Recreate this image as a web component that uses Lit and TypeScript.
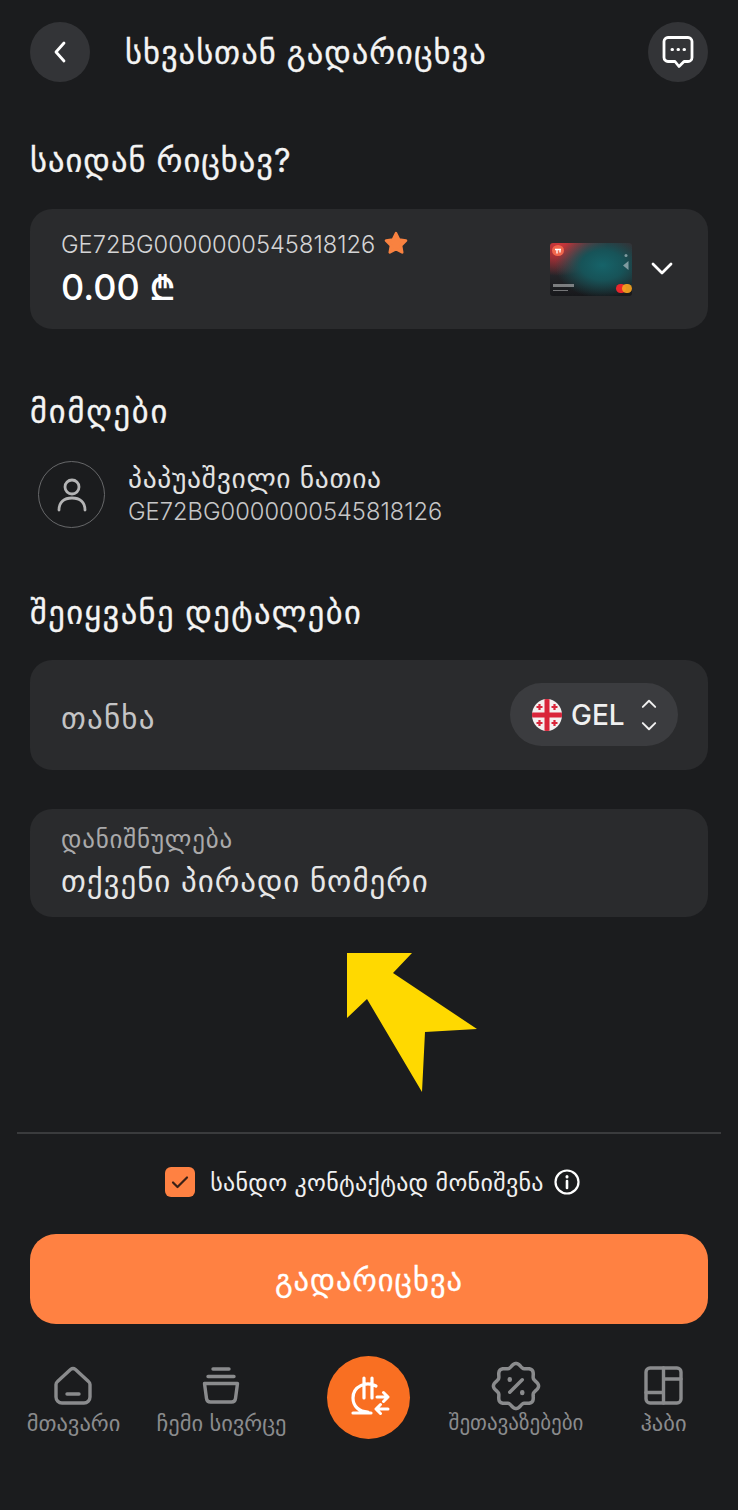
import { LitElement, html, css, svg } from "lit";
import { customElement } from "lit/decorators.js";

const IBAN = "GE72BG0000000545818126";

const chevronDown = (cls: string) => html`<svg class=${cls} viewBox="0 0 24 16" fill="none" stroke="currentColor" stroke-width="2.8" stroke-linecap="round" stroke-linejoin="round"><path d="M3 3l9 9 9-9"/></svg>`;

const flagCross = (x: number, y: number) => svg`<path d="M${x - 3} ${y}h6M${x} ${y - 3}v6" stroke="#d9253a" stroke-width="2.2"/>`;

// wavy outline of the offers badge
const badgePath = () => {
  const pts: string[] = [];
  for (let i = 0; i < 96; i++) {
    const a = (i / 96) * Math.PI * 2;
    const r = 16.6 + 1.5 * Math.cos(8 * a);
    pts.push(`${(20 + r * Math.sin(a)).toFixed(2)} ${(20 - r * Math.cos(a)).toFixed(2)}`);
  }
  return `M${pts.join("L")}Z`;
};

const navItems = [
  {
    label: "მთავარი",
    cls: "home",
    icon: svg`<path d="M3.500 15.500 16.500 3.500a4 4 0 0 1 5 0L34.500 15.500a4 4 0 0 1 1.500 3V31a6 6 0 0 1-6 6H8a6 6 0 0 1-6-6V18.500a4 4 0 0 1 1.500-3Z"/><path d="M13 28h12"/>`,
  },
  {
    label: "ჩემი სივრცე",
    cls: "space",
    icon: svg`<path d="M11 3h16M6 10.500h26"/><path d="M2.500 17.500h33l-2 15a4 4 0 0 1-4 3.500H8.500a4 4 0 0 1-4-3.500Z"/>`,
  },
  null,
  {
    label: "შეთავაზებები",
    cls: "offers",
    icon: svg`<path d=${badgePath()}/><path d="M25 15 15 25"/><path d="M15 14.500v.5M25 25v.5" stroke-width="3.600"/>`,
  },
  {
    label: "ჰაბი",
    cls: "hub",
    icon: svg`<rect x="2" y="2" width="35" height="35" rx="4"/><path d="M19.500 2v35M2 26.500h17.500M19.500 13H37"/>`,
  },
];

@customElement("app-root")
export class AppRoot extends LitElement {
  static styles = css`
    :host {
      display: block;
      position: relative;
      width: 738px;
      height: 1510px;
      overflow: hidden;
      background: #1b1c1e;
      color: #f4f4f4;
      font-family: "Inter", "DejaVu Sans", sans-serif;
    }
    svg {
      display: block;
    }
    .page {
      display: flex;
      flex-direction: column;
      padding: 22px 30px 0;
      box-sizing: border-box;
      height: 100%;
    }
    .header {
      display: flex;
      align-items: center;
      height: 60px;
    }
    .round {
      width: 60px;
      height: 60px;
      border-radius: 50%;
      background: #333437;
      display: flex;
      align-items: center;
      justify-content: center;
      flex: none;
    }
    .round .back {
      width: 14px;
      height: 24px;
    }
    .round .chat {
      width: 32px;
      height: 34px;
    }
    .title {
      flex: 1;
      margin-left: 35px;
      padding-top: 2px;
      font-size: 32.5px;
      letter-spacing: 1px;
      line-height: 58px;
      white-space: nowrap;
      -webkit-text-stroke: 0.3px currentColor;
    }
    h2 {
      margin: 0;
      font-weight: 400;
      font-size: 32.5px;
      letter-spacing: 1px;
      line-height: 36px;
      white-space: nowrap;
      -webkit-text-stroke: 0.3px currentColor;
    }
    .from-title {
      margin-top: 61px;
    }
    .card {
      background: #2a2b2d;
      border-radius: 22px;
    }
    .account {
      margin-top: 30px;
      height: 120px;
      display: flex;
      align-items: center;
      padding: 0 34px 0 31px;
      box-sizing: border-box;
    }
    .account-text {
      flex: 1;
    }
    .iban-row {
      display: flex;
      align-items: center;
      gap: 8px;
      font-size: 23.7px;
      font-weight: 300;
      line-height: 28px;
      color: #d4d4d5;
    }
    .star {
      width: 26px;
      height: 26px;
      margin-top: -3px;
    }
    .balance {
      margin-top: 7px;
      font-size: 36px;
      line-height: 42px;
      font-weight: 500;
      color: #fff;
    }
    .thumb {
      position: relative;
      width: 82px;
      height: 53px;
      border-radius: 3px;
      overflow: hidden;
      background:
        radial-gradient(ellipse 58% 62% at 64% 42%, #166369 0%, #175358 45%, rgba(23, 70, 74, 0) 100%),
        radial-gradient(ellipse 60% 62% at 10% 0%, #cf373b 0%, #a02f35 45%, rgba(120, 40, 46, 0) 100%),
        linear-gradient(180deg, #3a2a2e 0%, #26262a 55%, #17181b 100%);
    }
    .thumb .logo {
      position: absolute;
      left: 2px;
      top: 2px;
      width: 12px;
      height: 11px;
    }
    .thumb .mc1,
    .thumb .mc2 {
      position: absolute;
      top: 41px;
      width: 9.5px;
      height: 9.5px;
      border-radius: 50%;
    }
    .thumb .mc1 {
      left: 66px;
      background: #e8262c;
    }
    .thumb .mc2 {
      left: 72px;
      background: #f5a21f;
      opacity: 0.92;
    }
    .thumb .name {
      position: absolute;
      left: 3px;
      top: 41px;
      width: 21px;
      height: 3px;
      background: #a4a5a7;
      opacity: 0.7;
    }
    .thumb .dots {
      position: absolute;
      left: 3px;
      top: 47px;
      width: 15px;
      height: 1.5px;
      background: #8c8d8f;
      opacity: 0.8;
    }
    .thumb .nfc {
      position: absolute;
      left: 72px;
      top: 10px;
      width: 7px;
      height: 17px;
    }
    .account .chev {
      width: 24px;
      height: 16px;
      margin-left: 18px;
      color: #fff;
    }
    .to-title {
      margin-top: 65px;
      letter-spacing: 1.8px;
    }
    .recipient {
      margin-top: 31px;
      margin-left: 8px;
      display: flex;
      align-items: center;
      gap: 23px;
    }
    .avatar {
      width: 67px;
      height: 67px;
      border: 1.5px solid #67686a;
      border-radius: 50%;
      box-sizing: border-box;
      display: flex;
      align-items: center;
      justify-content: center;
      color: #b4b4b5;
    }
    .avatar svg {
      width: 30px;
      height: 34px;
    }
    .recipient-name {
      font-size: 27.5px;
      letter-spacing: 0.7px;
      line-height: 34px;
      color: #e2e2e2;
    }
    .recipient-iban {
      font-size: 23.7px;
      font-weight: 300;
      line-height: 32px;
      margin-top: 1px;
      color: #c6c6c7;
    }
    .details-title {
      margin-top: 67px;
      letter-spacing: 1.4px;
    }
    .amount {
      margin-top: 29px;
      height: 110px;
      display: flex;
      align-items: center;
      justify-content: space-between;
      padding: 0 30px 0 31px;
      box-sizing: border-box;
    }
    .amount-label {
      font-size: 31px;
      letter-spacing: 1.2px;
      padding-top: 4px;
      color: #c4c4c5;
    }
    .currency {
      width: 168px;
      height: 63px;
      border-radius: 32px;
      background: #3b3c3f;
      display: flex;
      align-items: center;
      padding-left: 22px;
      box-sizing: border-box;
      margin-top: -1px;
    }
    .flag {
      width: 30px;
      height: 32px;
    }
    .code {
      margin-left: 9px;
      font-size: 28px;
      font-weight: 500;
      color: #f0f0f0;
    }
    .updown {
      margin-left: 15px;
      display: flex;
      flex-direction: column;
      gap: 12px;
      color: #f0f0f0;
    }
    .updown svg {
      width: 18px;
      height: 11px;
    }
    .updown svg:first-child {
      transform: scaleY(-1);
    }
    .purpose {
      margin-top: 39px;
      height: 108px;
      padding: 16px 31px 0;
      box-sizing: border-box;
    }
    .purpose-label {
      font-size: 25px;
      letter-spacing: 0.8px;
      line-height: 28px;
      color: #a9a9aa;
    }
    .purpose-value {
      margin-top: 10px;
      font-size: 31px;
      letter-spacing: 0.95px;
      line-height: 36px;
      color: #e6e6e6;
    }
    .divider {
      margin: 215px -13px 0;
      height: 2px;
      background: #3a3b3d;
    }
    .trusted {
      margin-top: 33px;
      padding-left: 7px;
      display: flex;
      align-items: center;
      justify-content: center;
      gap: 15px;
      font-size: 24px;
      letter-spacing: 0.3px;
      color: #f0f0f0;
      height: 30px;
    }
    .check {
      width: 30px;
      height: 30px;
      background: #ff8142;
      border-radius: 6px;
      display: flex;
      align-items: center;
      justify-content: center;
      color: #3a2016;
    }
    .check svg {
      width: 18px;
      height: 14px;
    }
    .info {
      width: 26px;
      height: 26px;
      margin-left: -5px;
    }
    .pay {
      margin-top: 37px;
      height: 90px;
      border-radius: 26px;
      background: #ff8142;
      display: flex;
      align-items: center;
      justify-content: center;
      font-size: 30.5px;
      letter-spacing: 1px;
      color: #fff;
      -webkit-text-stroke: 0.3px currentColor;
    }
    .nav {
      margin: 32px -30px 0 -30px;
      padding-left: 13.5px;
      display: flex;
      align-items: flex-start;
      height: 83px;
    }
    .nav-item {
      width: 120px;
      display: flex;
      flex-direction: column;
      align-items: center;
      color: #8a8b8d;
      padding-top: 10px;
      flex: none;
    }
    .nav-item svg {
      width: 40px;
      height: 40px;
      fill: none;
      stroke: currentColor;
      stroke-width: 3.4;
      stroke-linecap: round;
      stroke-linejoin: round;
    }
    .nav-item.offers svg {
      width: 50px;
      height: 50px;
      margin: -5px 0;
      stroke-width: 2.8;
    }
    .nav-label {
      margin-top: 4px;
      font-size: 22.5px;
      line-height: 26px;
      white-space: nowrap;
    }
    .nav-item.offers .nav-label {
      font-size: 21px;
    }
    .nav-item.space {
      margin-left: 28px;
    }
    .nav-item.offers {
      width: 140px;
      margin-left: 36.5px;
    }
    .nav-item.hub {
      width: 80px;
      margin-left: 37.5px;
    }
    .transfer {
      flex: none;
      width: 83px;
      height: 83px;
      margin-left: 45px;
      border-radius: 50%;
      background: #f96f22;
      display: flex;
      align-items: center;
      justify-content: center;
      color: #fff;
    }
    .transfer svg {
      width: 44px;
      height: 44px;
    }
    .pointer {
      position: absolute;
      left: 340px;
      top: 945px;
      width: 145px;
      height: 155px;
    }
  `;

  render() {
    return html`
      <div class="page">
        <div class="header">
          <div class="round">
            <svg class="back" viewBox="0 0 14 24" fill="none" stroke="#fff" stroke-width="2.8" stroke-linecap="round" stroke-linejoin="round"><path d="M11 3 3 12l8 9"/></svg>
          </div>
          <div class="title">სხვასთან გადარიცხვა</div>
          <div class="round">
            <svg class="chat" viewBox="0 0 32 34" fill="none" stroke="#fff" stroke-width="2.8" stroke-linejoin="round"><path d="M6 2.500h20a4 4 0 0 1 4 4v16a4 4 0 0 1-4 4h-4l-5 5-4-5H6a4 4 0 0 1-4-4v-16a4 4 0 0 1 4-4Z"/><path d="M10 14.500h.5M16 14.500h.5M22 14.500h.5" stroke-width="3" stroke-linecap="round"/></svg>
          </div>
        </div>

        <h2 class="from-title">საიდან რიცხავ?</h2>
        <div class="card account">
          <div class="account-text">
            <div class="iban-row">
              ${IBAN}
              <svg class="star" viewBox="0 0 24 24" fill="#f98240" stroke="#f98240" stroke-width="2.5" stroke-linejoin="round"><path d="M12 3l2.800 5.900 6.400.9-4.600 4.500 1.100 6.400-5.700-3-5.700 3 1.100-6.400-4.600-4.500 6.400-.9Z"/></svg>
            </div>
            <div class="balance">0.00 ₾</div>
          </div>
          <div class="thumb">
            <svg class="logo" viewBox="0 0 12 11"><ellipse cx="6" cy="5.500" rx="6" ry="5.500" fill="#f0664c"/><path d="M3 4.500h6M5 4.500v4M8 4.500v3" stroke="#fff" stroke-width="1.300" fill="none"/></svg>
            <svg class="nfc" viewBox="0 0 7 17" fill="#7f9ba0"><circle cx="4" cy="2.500" r="1.500"/><path d="M6.500 8v9L1 12.500Z"/></svg>
            <span class="name"></span>
            <span class="dots"></span>
            <span class="mc1"></span>
            <span class="mc2"></span>
          </div>
          ${chevronDown("chev")}
        </div>

        <h2 class="to-title">მიმღები</h2>
        <div class="recipient">
          <div class="avatar">
            <svg viewBox="0 0 30 34" fill="none" stroke="currentColor" stroke-width="2.8" stroke-linecap="round"><circle cx="15" cy="9" r="7"/><path d="M2 32c0-8 5-12 13-12s13 4 13 12"/></svg>
          </div>
          <div>
            <div class="recipient-name">პაპუაშვილი ნათია</div>
            <div class="recipient-iban">${IBAN}</div>
          </div>
        </div>

        <h2 class="details-title">შეიყვანე დეტალები</h2>
        <div class="card amount">
          <div class="amount-label">თანხა</div>
          <div class="currency">
            <svg class="flag" viewBox="0 0 30 32">
              <defs><clipPath id="flag-clip"><ellipse cx="15" cy="16" rx="15" ry="16"/></clipPath></defs>
              <g clip-path="url(#flag-clip)">
                <rect width="30" height="32" fill="#f4f0f0"/>
                <path d="M15 0v32M0 16h30" stroke="#d9253a" stroke-width="5"/>
                ${flagCross(7.5, 8)}${flagCross(22.5, 8)}${flagCross(7.5, 24)}${flagCross(22.5, 24)}
              </g>
            </svg>
            <span class="code">GEL</span>
            <div class="updown">${chevronDown("")}${chevronDown("")}</div>
          </div>
        </div>

        <div class="card purpose">
          <div class="purpose-label">დანიშნულება</div>
          <div class="purpose-value">თქვენი პირადი ნომერი</div>
        </div>

        <div class="divider"></div>

        <div class="trusted">
          <div class="check">
            <svg viewBox="0 0 18 14" fill="none" stroke="currentColor" stroke-width="2.2" stroke-linecap="round" stroke-linejoin="round"><path d="M2 7.500l4.500 4.500L16 2.500"/></svg>
          </div>
          <span>სანდო კონტაქტად მონიშვნა</span>
          <svg class="info" viewBox="0 0 26 26" fill="none" stroke="#fff" stroke-width="2.2"><circle cx="13" cy="13" r="11.500"/><path d="M13 12v7" stroke-linecap="round" stroke-width="2.6"/><path d="M13 7.500v.5" stroke-linecap="round" stroke-width="3"/></svg>
        </div>

        <div class="pay">გადარიცხვა</div>

        <nav class="nav">
          ${navItems.map((item) =>
            item
              ? html`<div class="nav-item ${item.cls}">
                  <svg viewBox="0 0 40 40">${item.icon}</svg>
                  <span class="nav-label">${item.label}</span>
                </div>`
              : html`<div class="transfer">
                  <svg viewBox="0 0 44 44" fill="none" stroke="currentColor" stroke-width="3.2" stroke-linecap="round" stroke-linejoin="round">
                    <path d="M18 2v20M26 2v20M30 10C20 5 7 10 7 22c0 8 6 14 15 14M7 37h18"/>
                    <path d="M31 21h11M37.500 16.500 42 21l-4.500 4.500M42 33H30M34.500 28.500 30 33l4.500 4.500" stroke-width="3"/>
                  </svg>
                </div>`
          )}
        </nav>
      </div>

      <svg class="pointer" viewBox="340 945 145 155"><polygon fill="#ffd900" points="347,953 412,953 393,973 477,1029 425,1032 422,1092 367,999 347,1018"/></svg>
    `;
  }
}
